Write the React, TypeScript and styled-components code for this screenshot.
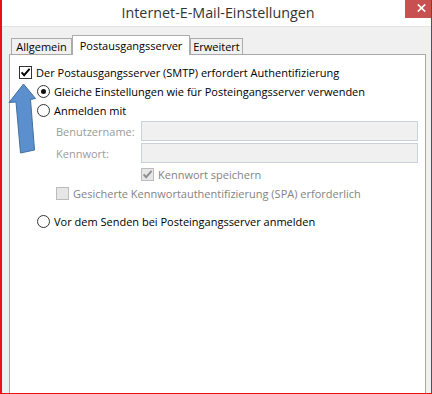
import React from "react";
import styled, { createGlobalStyle } from "styled-components";

const Global = createGlobalStyle`
  html, body { margin: 0; padding: 0; background: #ffffff; }
  body { font-family: "Open Sans", "Noto Sans", sans-serif; }
`;

const Window = styled.div`
  position: relative;
  width: 432px;
  height: 394px;
  box-sizing: border-box;
  border-left: 2px solid #e81212;
  border-right: 1px solid #e81212;
  border-bottom: 1px solid #e81212;
  display: flex;
  flex-direction: column;
  background: #f0f0f0;
  overflow: hidden;
  font-family: "Open Sans", "Noto Sans", sans-serif;
  font-size: 11px;
  color: #000;
`;

const TitleBar = styled.div`
  height: 27px;
  box-sizing: border-box;
  background: #ffffff;
  border-bottom: 1px solid #e4e4e4;
  display: grid;
  grid-template-columns: 1fr auto 1fr;
  align-items: start;
`;

const Title = styled.div`
  grid-column: 2;
  font-size: 14.3px;
  line-height: 26px;
  color: #333333;
  padding-left: 3px;
  white-space: nowrap;
`;

const CloseButton = styled.div`
  grid-column: 3;
  justify-self: end;
  width: 26px;
  height: 18px;
  box-sizing: border-box;
  background: #c75050;
  display: flex;
  align-items: center;
  justify-content: center;
  padding: 0 0 2px 6px;
`;

const Body = styled.div`
  flex: 1;
  min-height: 0;
  display: flex;
  flex-direction: column;
  padding: 8px 5px 0 7px;
`;

const TabStrip = styled.div`
  display: flex;
  align-items: flex-end;
  height: 20px;
  padding-left: 2px;
  margin-bottom: -1px;
  position: relative;
  z-index: 1;
`;

const Tab = styled.div<{ $active?: boolean; $w: number }>`
  box-sizing: border-box;
  width: ${(p) => p.$w}px;
  height: ${(p) => (p.$active ? 20 : 16)}px;
  margin-bottom: ${(p) => (p.$active ? 0 : 1)}px;
  border: 1px solid #acacac;
  border-bottom: none;
  background: ${(p) => (p.$active ? "#ffffff" : "#f0f0f0")};
  display: flex;
  align-items: center;
  justify-content: center;
  white-space: nowrap;
  line-height: 1;
`;

const Panel = styled.div`
  flex: 1;
  background: #ffffff;
  border: 1px solid #a9a9a9;
  border-bottom: none;
  padding: 8px 7px 0 9px;
  display: flex;
  flex-direction: column;
`;

const Row = styled.div<{ $indent?: number; $h?: number; $mt?: number }>`
  display: flex;
  align-items: center;
  gap: 4px;
  height: ${(p) => p.$h ?? 19}px;
  margin-top: ${(p) => p.$mt ?? 0}px;
  padding-left: ${(p) => p.$indent ?? 0}px;
  white-space: nowrap;
`;

const Box = styled.span<{ $disabled?: boolean }>`
  width: 13px;
  height: 13px;
  box-sizing: border-box;
  flex: none;
  border: 1px solid ${(p) => (p.$disabled ? "#bcbcbc" : "#333333")};
  background: ${(p) => (p.$disabled ? "#e6e6e6" : "#ffffff")};
  display: inline-flex;
  align-items: center;
  justify-content: center;
`;

const Radio = styled.span<{ $checked?: boolean }>`
  width: 13px;
  height: 13px;
  box-sizing: border-box;
  flex: none;
  border-radius: 50%;
  border: 1px solid #333333;
  background: #ffffff;
  display: inline-flex;
  align-items: center;
  justify-content: center;
  &::after {
    content: "";
    display: ${(p) => (p.$checked ? "block" : "none")};
    width: 5px;
    height: 5px;
    border-radius: 50%;
    background: #111111;
  }
`;

const Label = styled.span<{ $disabled?: boolean }>`
  color: ${(p) => (p.$disabled ? "#838383" : "#000000")};
`;

const FieldLabel = styled.span`
  width: 81px;
  flex: none;
  color: #9b9b9b;
`;

const Field = styled.div`
  flex: 1;
  height: 20px;
  box-sizing: border-box;
  border: 1px solid #c9d1db;
  background: #f0f0f0;
`;

const ArrowLayer = styled.svg`
  position: absolute;
  left: -2px;
  top: 80px;
  pointer-events: none;
`;

const Check: React.FC<{ color: string }> = ({ color }) => (
  <svg width="11" height="11" viewBox="0 0 11 11">
    <path d="M1.6 5.4 L4.1 8.2 L9.6 1.8" fill="none" stroke={color} strokeWidth="1.9" />
  </svg>
);

const CheckBox: React.FC<{ checked?: boolean; disabled?: boolean }> = ({ checked, disabled }) => (
  <Box $disabled={disabled}>{checked && <Check color={disabled ? "#8f8f8f" : "#000000"} />}</Box>
);

export default function App() {
  return (
    <>
      <Global />
      <Window>
        <TitleBar>
          <Title>Internet-E-Mail-Einstellungen</Title>
          <CloseButton>
            <svg width="9" height="8" viewBox="0 0 9 8">
              <path d="M0.8 0.5 L8.2 7.5 M8.2 0.5 L0.8 7.5" stroke="#ffffff" strokeWidth="1.7" />
            </svg>
          </CloseButton>
        </TitleBar>
        <Body>
          <TabStrip>
            <Tab $w={61}>Allgemein</Tab>
            <Tab $w={118} $active>
              Postausgangsserver
            </Tab>
            <Tab $w={53}>Erweitert</Tab>
          </TabStrip>
          <Panel>
            <Row>
              <CheckBox checked />
              <Label>Der Postausgangsserver (SMTP) erfordert Authentifizierung</Label>
            </Row>
            <Row $indent={18}>
              <Radio $checked />
              <Label>Gleiche Einstellungen wie für Posteingangsserver verwenden</Label>
            </Row>
            <Row $indent={18}>
              <Radio />
              <Label>Anmelden mit</Label>
            </Row>
            <Row $indent={37} $h={20} $mt={1}>
              <FieldLabel>Benutzername:</FieldLabel>
              <Field />
            </Row>
            <Row $indent={37} $h={20} $mt={2}>
              <FieldLabel>Kennwort:</FieldLabel>
              <Field />
            </Row>
            <Row $indent={122} $mt={2}>
              <CheckBox checked disabled />
              <Label $disabled>Kennwort speichern</Label>
            </Row>
            <Row $indent={37}>
              <CheckBox disabled />
              <Label $disabled>Gesicherte Kennwortauthentifizierung (SPA) erforderlich</Label>
            </Row>
            <Row $indent={18} $mt={9}>
              <Radio />
              <Label>Vor dem Senden bei Posteingangsserver anmelden</Label>
            </Row>
          </Panel>
        </Body>
        <ArrowLayer width="50" height="80" viewBox="0 0 50 80">
          <polygon
            points="23.5,4 35.5,18.5 30.5,19.5 34.5,70 20.5,73 16,22 9,22.5"
            fill="#5b8fcd"
            stroke="#41709f"
            strokeWidth="1"
            strokeLinejoin="miter"
          />
        </ArrowLayer>
      </Window>
    </>
  );
}
